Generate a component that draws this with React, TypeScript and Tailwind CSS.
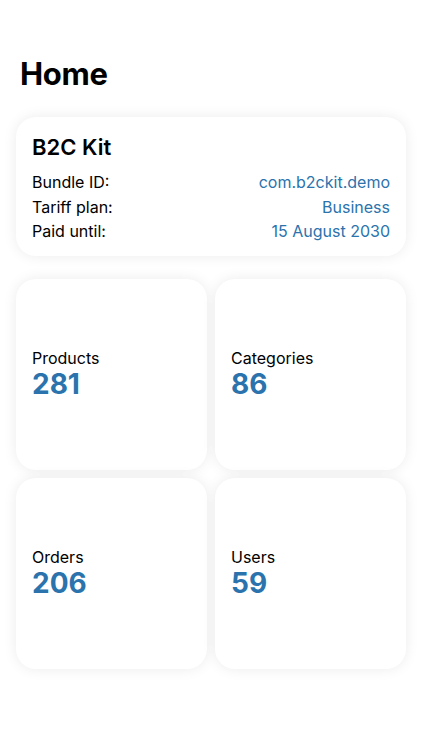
const stats = [
  { label: "Products", value: "281" },
  { label: "Categories", value: "86" },
  { label: "Orders", value: "206" },
  { label: "Users", value: "59" },
];

const info = [
  { label: "Bundle ID:", value: "com.b2ckit.demo" },
  { label: "Tariff plan:", value: "Business" },
  { label: "Paid until:", value: "15 August 2030" },
];

export default function App() {
  return (
    <div
      className="min-h-[750px] w-[422px] bg-white text-black"
      style={{ fontFamily: "Inter, 'Liberation Sans', sans-serif" }}
    >
      <div className="px-4 pt-[54px]">
        <h1 className="px-1 text-[31px] font-bold leading-[40px] tracking-[-0.3px]">Home</h1>

        <div className="mt-[23px] rounded-[20px] bg-white px-4 pt-[16px] pb-[12px] shadow-[0_0_14px_rgba(0,0,0,0.08)]">
          <h2 className="text-[22px] font-semibold leading-[28px]">B2C Kit</h2>
          <div className="mt-[9px] flex flex-col">
            {info.map((row) => (
              <div key={row.label} className="flex items-center justify-between text-[16px] leading-[24.5px]">
                <span>{row.label}</span>
                <span className="text-[#2b73ad]">{row.value}</span>
              </div>
            ))}
          </div>
        </div>

        <div className="mt-[23px] grid grid-cols-2 gap-2">
          {stats.map((s) => (
            <div
              key={s.label}
              className="flex h-[191px] flex-col justify-center rounded-[20px] bg-white px-4 shadow-[0_0_14px_rgba(0,0,0,0.08)]"
            >
              <span className="text-[16px] leading-[20px]">{s.label}</span>
              <span className="text-[28px] font-bold leading-[32px] text-[#2b73ad]">{s.value}</span>
            </div>
          ))}
        </div>
      </div>
    </div>
  );
}
